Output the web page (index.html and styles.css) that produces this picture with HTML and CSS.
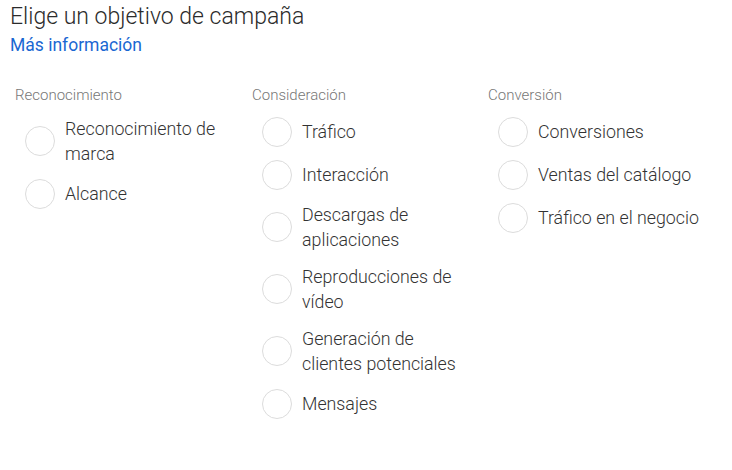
FILE: index.html
```html
<!DOCTYPE html>
<html>
<head>
    <title>Objetivo de campaña</title>
    <link rel="stylesheet" href="styles.css">
</head>
<body>
    <div class="cabecera">
        <h1 class="titolo">Elige un objetivo de campaña</h1>
        <a class="enlace" href="#">Más información</a>
    </div>
    <div class="columnas">
        <div class="columna">
            <div class="grupo">Reconocimiento</div>
            <label class="opcion"><span class="radio"></span><span class="testo">Reconocimiento de marca</span></label>
            <label class="opcion"><span class="radio"></span><span class="testo">Alcance</span></label>
        </div>
        <div class="columna">
            <div class="grupo">Consideración</div>
            <label class="opcion"><span class="radio"></span><span class="testo">Tráfico</span></label>
            <label class="opcion"><span class="radio"></span><span class="testo">Interacción</span></label>
            <label class="opcion"><span class="radio"></span><span class="testo">Descargas de aplicaciones</span></label>
            <label class="opcion"><span class="radio"></span><span class="testo">Reproducciones de vídeo</span></label>
            <label class="opcion"><span class="radio"></span><span class="testo">Generación de clientes potenciales</span></label>
            <label class="opcion"><span class="radio"></span><span class="testo">Mensajes</span></label>
        </div>
        <div class="columna">
            <div class="grupo">Conversión</div>
            <label class="opcion"><span class="radio"></span><span class="testo">Conversiones</span></label>
            <label class="opcion"><span class="radio"></span><span class="testo">Ventas del catálogo</span></label>
            <label class="opcion"><span class="radio"></span><span class="testo">Tráfico en el negocio</span></label>
        </div>
    </div>
</body>
</html>
```

FILE: styles.css
```css
* {
    box-sizing: border-box;
}
body {
    margin: 0;
    background-color: #fff;
    font-family: Roboto, "Liberation Sans", sans-serif;
    color: #333;
}
.cabecera {
    padding: 3px 10px 0;
}
.titolo {
    margin: 0;
    font-size: 23px;
    font-weight: 300;
    line-height: 27px;
    color: #2b2b2b;
}
.enlace {
    display: block;
    margin-top: 4px;
    font-size: 17.5px;
    line-height: 22px;
    color: #1a67d2;
    text-decoration: none;
}
.columnas {
    display: flex;
    padding: 30px 0 0 15px;
}
.columna {
    width: 236px;
    padding-right: 21px;
    display: flex;
    flex-direction: column;
    gap: 12px;
}
.columna:first-child {
    width: 237px;
}
.grupo {
    font-size: 15px;
    font-weight: 300;
    line-height: 18px;
    color: #777;
}
.opcion {
    display: flex;
    align-items: center;
    gap: 10px;
    min-height: 31px;
    padding-left: 10px;
    cursor: pointer;
}
.radio {
    flex: none;
    width: 30px;
    height: 30px;
    border: 1px solid #dcdcdc;
    border-radius: 50%;
}
.testo {
    font-size: 17.8px;
    font-weight: 300;
    line-height: 25px;
    color: #333;
}
```
